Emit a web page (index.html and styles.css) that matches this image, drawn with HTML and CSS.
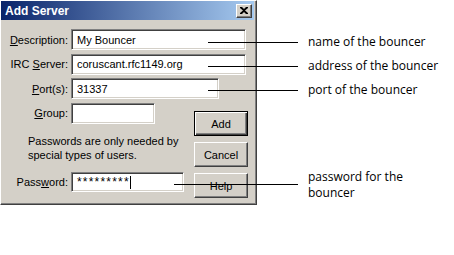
FILE: index.html
```html
<!DOCTYPE html>
<html lang="en">
<head>
    <meta charset="UTF-8">
    <meta name="viewport" content="width=device-width, initial-scale=1.0">
    <title>Add Server</title>
    <link rel="stylesheet" href="styles.css">
</head>
<body>

    <div class="stage">
        <div class="window">
            <div class="titlebar">
                <span class="title">Add Server</span>
                <span class="close-btn">
                    <svg width="8" height="7" viewBox="0 0 8 7">
                        <path d="M0 0h2l2 2 2-2h2v1L5 3.5 8 6v1H6L4 5 2 7H0V6l3-2.5L0 1z" fill="#000"/>
                    </svg>
                </span>
            </div>

            <div class="dialog-body">
                <div class="row">
                    <span class="label"><u>D</u>escription:</span>
                    <span class="field wide">My Bouncer</span>
                </div>
                <div class="row">
                    <span class="label">IRC <u>S</u>erver:</span>
                    <span class="field wide">coruscant.rfc1149.org</span>
                </div>
                <div class="row">
                    <span class="label"><u>P</u>ort(s):</span>
                    <span class="field port">31337</span>
                </div>

                <div class="lower">
                    <div class="lower-left">
                        <div class="row">
                            <span class="label"><u>G</u>roup:</span>
                            <span class="field group"></span>
                        </div>
                        <p class="hint">Passwords are only needed by<br>special types of users.</p>
                        <div class="row pass-row">
                            <span class="label">Pass<u>w</u>ord:</span>
                            <span class="field pass"><span class="stars">*********</span><span class="caret"></span></span>
                        </div>
                    </div>
                    <div class="buttons">
                        <button class="btn default">Add</button>
                        <button class="btn">Cancel</button>
                        <button class="btn">Help</button>
                    </div>
                </div>
            </div>
        </div>

        <!-- callouts drawn over the dialog -->
        <div class="callout c-name"><span class="lead"></span><span class="note">name of the bouncer</span></div>
        <div class="callout c-addr"><span class="lead"></span><span class="note">address of the bouncer</span></div>
        <div class="callout c-port"><span class="lead"></span><span class="note">port of the bouncer</span></div>
        <div class="callout c-pass"><span class="lead long"></span><span class="note two-line">password for the<br>bouncer</span></div>
    </div>

</body>
</html>
```

FILE: styles.css
```css
body {
    margin: 0;
    background-color: #fff;
}
.stage {
    position: relative;
    width: 454px;
    height: 255px;
    font-family: "Liberation Sans", Arial, sans-serif;
    font-size: 11px;
    color: #000;
}
.window {
    width: 257px;
    height: 205px;
    box-sizing: border-box;
    background-color: #d4d0c8;
    border: 1px solid;
    border-color: #fff #404040 #404040 #fff;
    box-shadow: inset -1px -1px #808080;
    padding: 0 2px 2px 0;
}
.titlebar {
    height: 19px;
    display: flex;
    align-items: center;
    justify-content: space-between;
    padding: 0 2px 0 4px;
    background: linear-gradient(to right, #0a246a, #a6caf0);
    color: #fff;
    font-weight: bold;
    font-size: 12px;
}
.close-btn {
    width: 16px;
    height: 14px;
    box-sizing: border-box;
    display: flex;
    align-items: center;
    justify-content: center;
    background-color: #d4d0c8;
    border: 1px solid;
    border-color: #fff #404040 #404040 #fff;
    box-shadow: inset -1px -1px #808080;
}
.dialog-body {
    padding: 9px 0 0 8px;
}
.row {
    display: flex;
    align-items: center;
    height: 21px;
    margin-bottom: 3.5px;
}
.label {
    width: 59px;
    margin-right: 3px;
    text-align: right;
}
.field {
    height: 21px;
    box-sizing: border-box;
    display: flex;
    align-items: center;
    padding: 0 5px;
    background-color: #fff;
    border: 1px solid;
    border-color: #808080 #fff #fff #808080;
    box-shadow: inset 1px 1px #404040, inset -1px -1px #d4d0c8;
}
.wide { width: 175px; }
.port { width: 148px; }
.group { width: 84px; }
.pass { width: 113px; height: 20px; }
.stars {
    font-size: 12px;
    letter-spacing: 1.2px;
}
.caret {
    width: 1px;
    height: 13px;
    background-color: #000;
}
.lower {
    display: flex;
}
.lower-left {
    width: 185px;
}
.hint {
    margin: 10px 0 0 19px;
    line-height: 14px;
}
.pass-row {
    margin-top: 10px;
}
.buttons {
    display: flex;
    flex-direction: column;
    gap: 6px;
    padding-top: 8.5px;
}
.btn {
    width: 54px;
    height: 25px;
    box-sizing: border-box;
    padding: 0;
    font-family: inherit;
    font-size: 11px;
    color: #000;
    background-color: #d4d0c8;
    border: 1px solid;
    border-color: #fff #404040 #404040 #fff;
    box-shadow: inset -1px -1px #808080;
}
.btn.default {
    border-color: #000;
    box-shadow: inset 1px 1px #fff, inset -1px -1px #404040, inset -2px -2px #808080;
}
.callout {
    position: absolute;
    display: flex;
    align-items: center;
    height: 16px;
}
.lead {
    width: 90px;
    height: 1px;
    background-color: #000;
}
.lead.long {
    width: 124px;
}
.note {
    margin-left: 10px;
    font-family: "Open Sans", sans-serif;
    font-size: 12px;
    line-height: 16px;
    white-space: nowrap;
}
.note.two-line {
    padding-top: 2px;
}
.c-name { left: 208px; top: 34px; }
.c-addr { left: 208px; top: 58px; }
.c-port { left: 208px; top: 82px; }
.c-pass { left: 174px; top: 176px; }
```
